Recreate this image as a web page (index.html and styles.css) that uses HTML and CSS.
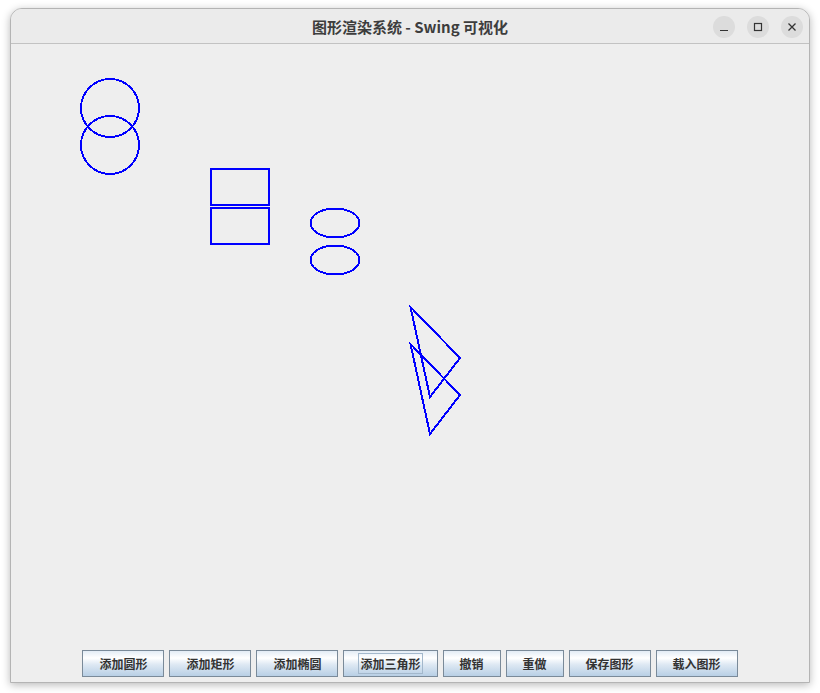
FILE: index.html
```html
<!DOCTYPE html>
<html lang="zh">
<head>
<meta charset="utf-8">
<title>图形渲染系统 - Swing 可视化</title>
<link rel="stylesheet" href="styles.css">
</head>
<body>
<div class="window">
  <div class="titlebar">
    <div class="spacer"></div>
    <div class="title">图形渲染系统 - Swing 可视化</div>
    <div class="controls">
      <span class="ctl">
        <svg width="22" height="22" viewBox="0 0 22 22"><line x1="7" y1="14.5" x2="15" y2="14.5" stroke="#333" stroke-width="1.2"/></svg>
      </span>
      <span class="ctl">
        <svg width="22" height="22" viewBox="0 0 22 22"><rect x="7.5" y="7.5" width="7" height="7" fill="none" stroke="#333" stroke-width="1.2"/></svg>
      </span>
      <span class="ctl">
        <svg width="22" height="22" viewBox="0 0 22 22"><path d="M7.5 7.5 L14.5 14.5 M14.5 7.5 L7.5 14.5" stroke="#333" stroke-width="1.3"/></svg>
      </span>
    </div>
  </div>
  <div class="canvas">
    <svg class="drawing" width="798" height="601" viewBox="11 44 798 601" shape-rendering="crispEdges">
      <g fill="none" stroke="#0000ff" stroke-width="2">
        <circle cx="110" cy="108" r="29"/>
        <circle cx="110" cy="145" r="29"/>
        <rect x="211" y="169" width="58" height="36"/>
        <rect x="211" y="208" width="58" height="36"/>
        <ellipse cx="335" cy="223" rx="24.5" ry="14.5"/>
        <ellipse cx="335" cy="260" rx="24.5" ry="14.5"/>
        <polygon points="410.5,307 460,358 430,397"/>
        <polygon points="410.5,344 460,395 430,434"/>
      </g>
    </svg>
  </div>
  <div class="buttons">
    <button class="btn">添加圆形</button>
    <button class="btn">添加矩形</button>
    <button class="btn">添加椭圆</button>
    <button class="btn"><span class="focus">添加三角形</span></button>
    <button class="btn">撤销</button>
    <button class="btn">重做</button>
    <button class="btn">保存图形</button>
    <button class="btn">载入图形</button>
  </div>
</div>
</body>
</html>
```

FILE: styles.css
```css
html, body {
  margin: 0;
  padding: 0;
  background: #ffffff;
  width: 820px;
  height: 693px;
  overflow: hidden;
}

.window {
  position: relative;
  margin: 8px 0 0 10px;
  width: 798px;
  height: 673px;
  border: 1px solid #b4b4b4;
  border-radius: 12px 12px 0 0;
  box-shadow: 0 2px 9px rgba(0, 0, 0, 0.28);
  display: flex;
  flex-direction: column;
  background: #eeeeee;
  overflow: hidden;
}

.titlebar {
  height: 34px;
  flex: none;
  background: #ebebeb;
  border-bottom: 1px solid #c2c2c2;
  display: grid;
  grid-template-columns: 1fr auto 1fr;
  align-items: center;
}

.title {
  font-family: "Noto Sans CJK SC", "DejaVu Sans", sans-serif;
  font-weight: bold;
  font-size: 15px;
  color: #3d3d3d;
  line-height: 20px;
  padding-top: 2px;
  white-space: nowrap;
}

.controls {
  justify-self: end;
  display: flex;
  gap: 12px;
  padding-right: 6px;
  padding-top: 1px;
}

.ctl {
  width: 22px;
  height: 22px;
  border-radius: 50%;
  background: #dcdcdc;
  display: block;
}

.ctl svg {
  display: block;
}

.canvas {
  flex: 1;
  background: #eeeeee;
  overflow: hidden;
}

.drawing {
  display: block;
}

.buttons {
  flex: none;
  display: flex;
  justify-content: center;
  gap: 5px;
  padding: 5px 0;
  background: #eeeeee;
}

.btn {
  height: 27px;
  padding: 0 16px;
  margin: 0;
  border: 1px solid #7a8a99;
  border-radius: 0;
  background: linear-gradient(to bottom, #e3ecf5 0%, #ffffff 28%, #dde8f3 55%, #b8cfe5 100%);
  font-family: "Noto Sans CJK SC", "DejaVu Sans", sans-serif;
  font-weight: bold;
  font-size: 12px;
  color: #333333;
  line-height: 17px;
  display: flex;
  align-items: center;
  justify-content: center;
}

.focus {
  outline: 1px solid #a3b8cc;
  outline-offset: 1px;
  line-height: 17px;
}
```
